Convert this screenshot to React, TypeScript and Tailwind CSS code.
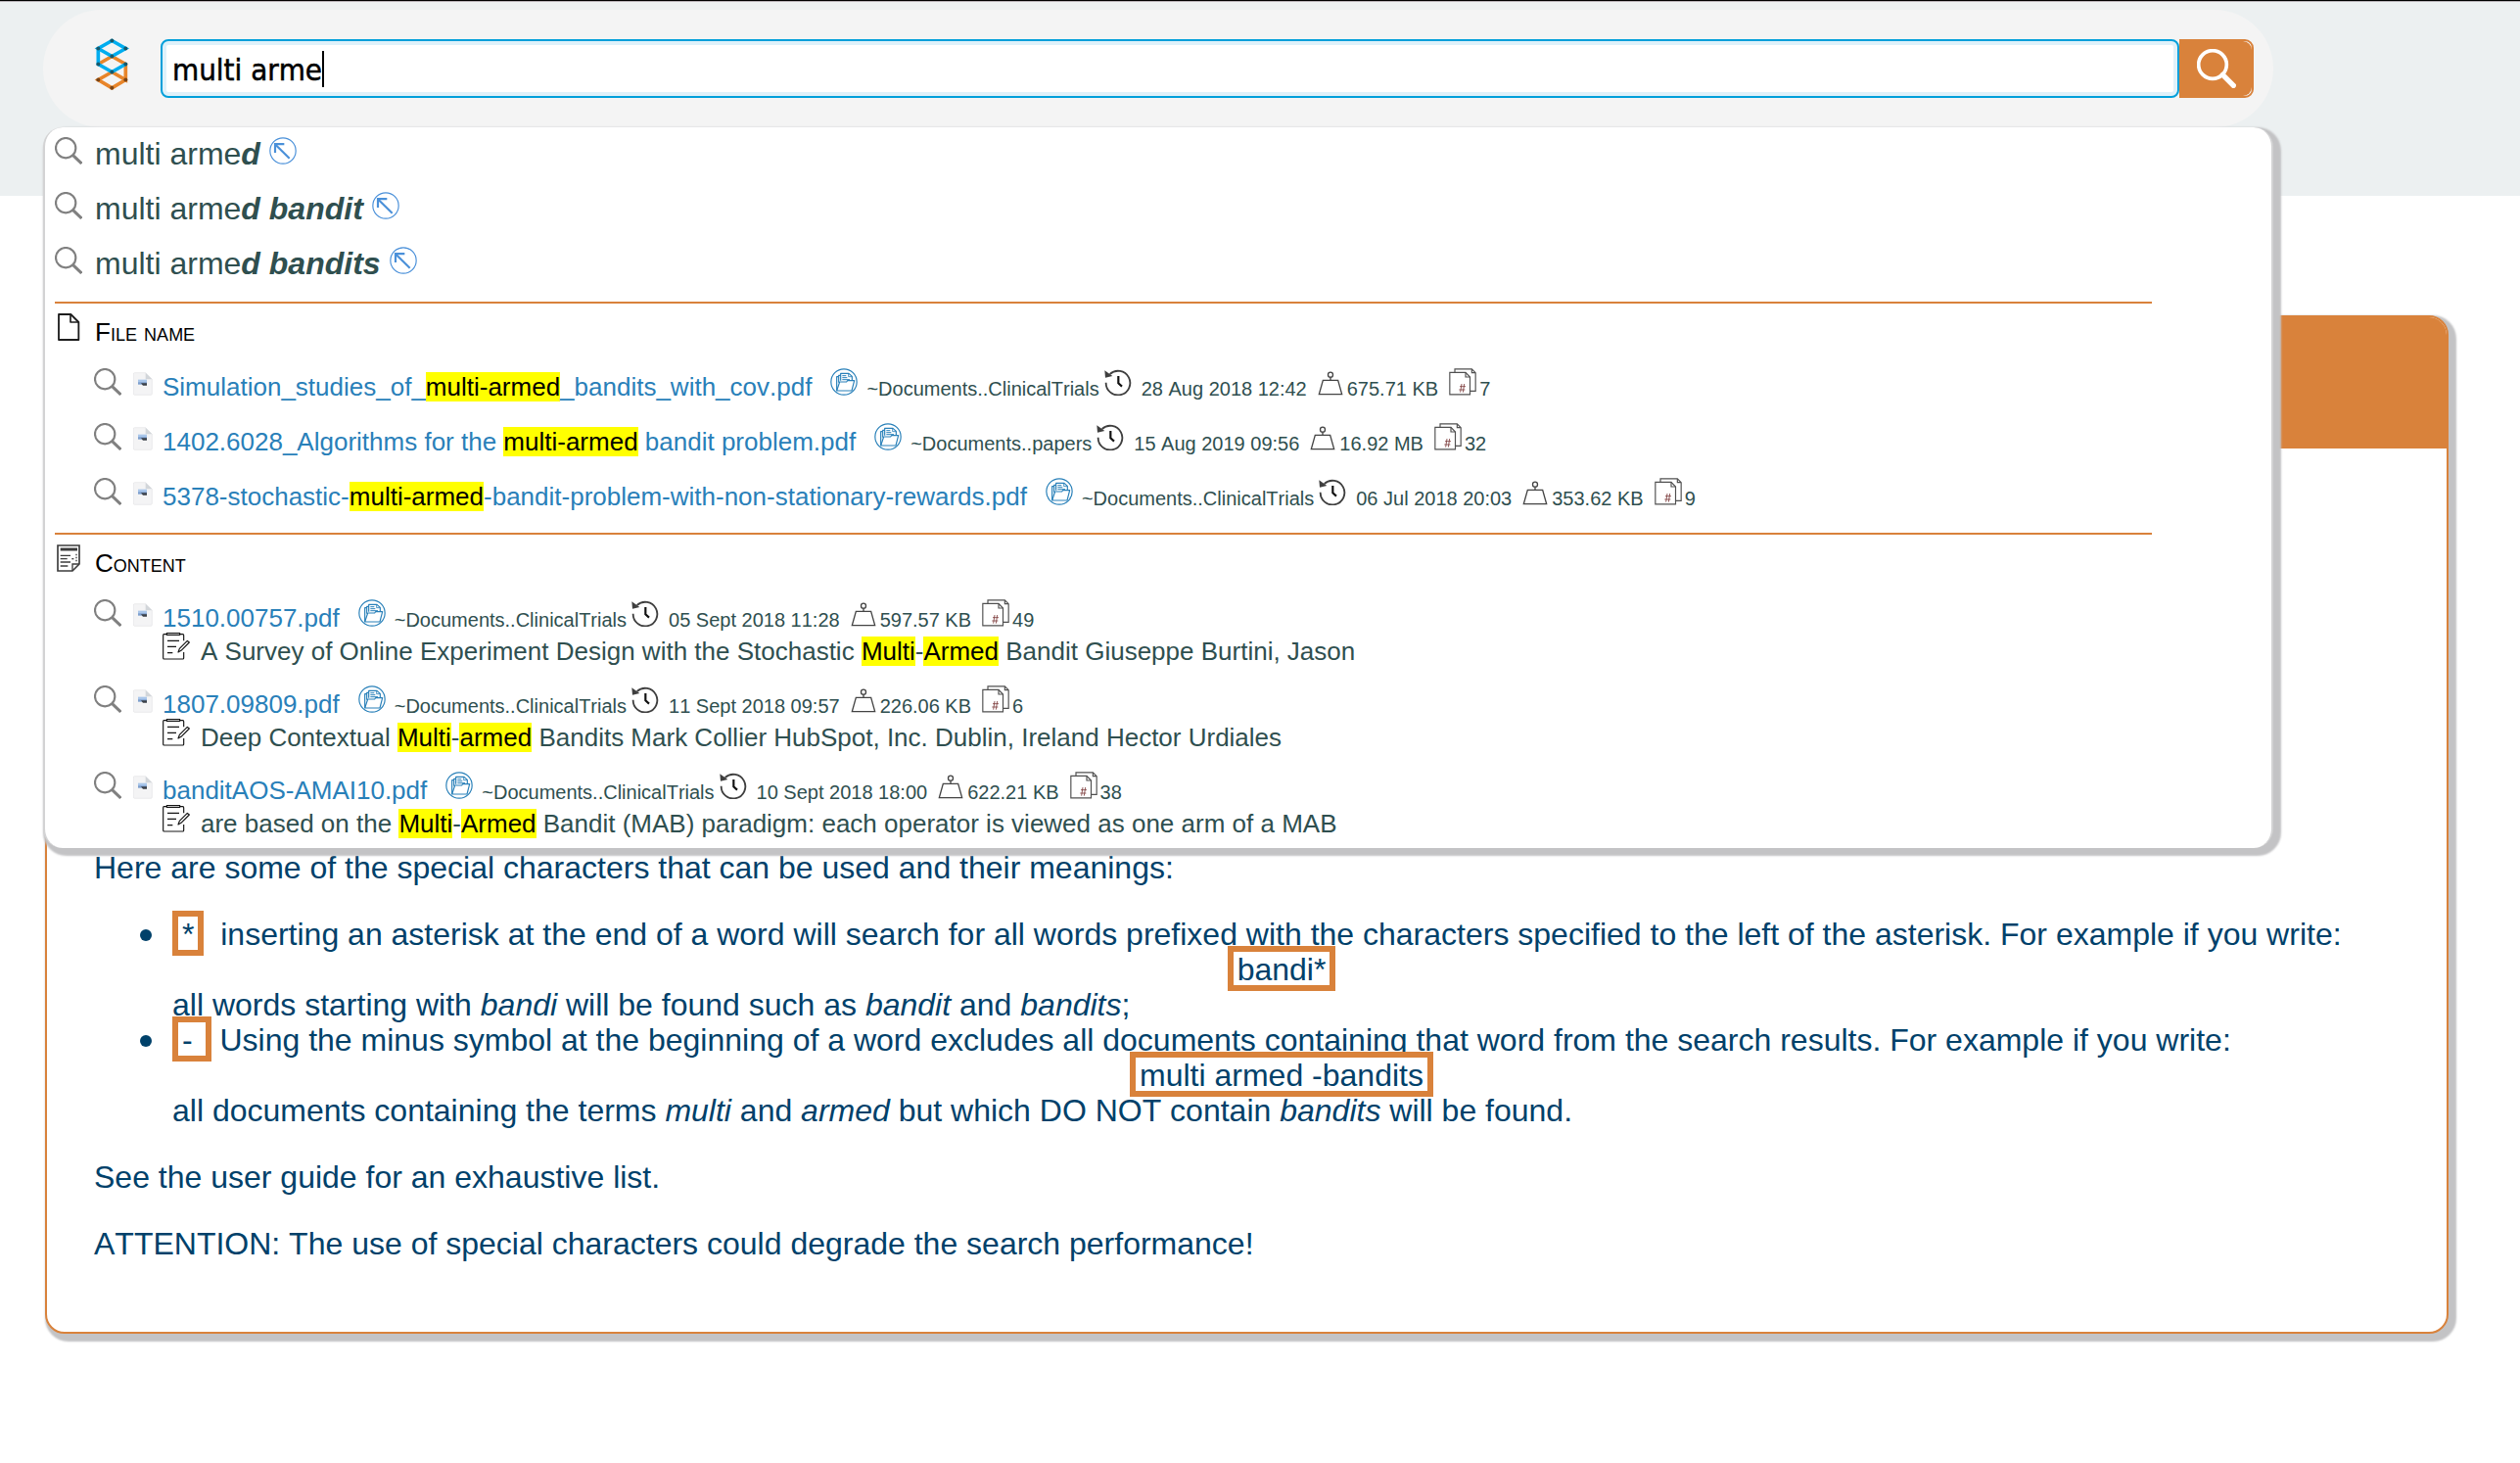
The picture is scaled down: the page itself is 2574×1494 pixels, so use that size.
import React from "react";

const ICON = "inline-block h-7 w-7 shrink-0 align-baseline";

function Logo() {
  const nodes: [number, number][] = [
    [55, 10], [13, 34], [97, 34], [55, 58], [13, 82], [97, 82], [55, 106],
  ];
  const lowNodes: [number, number][] = [[13, 130], [97, 130], [55, 155]];
  return (
    <svg viewBox="0 0 114 164" className="h-[55px] w-[38px] shrink-0" fill="none" strokeWidth="11">
      <path stroke="#e8852a" d="M13 82 55 58 97 82V130L55 106 13 130 55 155 97 130" />
      <path stroke="#00adef" d="M55 58 13 34 55 10 97 34 55 58M13 34V82L55 106 97 82" />
      {nodes.map(([x, y]) => (
        <circle key={`${x}-${y}`} cx={x} cy={y} r="6" fill="#17596b" />
      ))}
      {lowNodes.map(([x, y]) => (
        <circle key={`${x}-${y}`} cx={x} cy={y} r="6" fill="#7b4516" />
      ))}
    </svg>
  );
}

function SearchIcon() {
  return (
    <svg viewBox="0 0 84 84" className={ICON} fill="none" stroke="#808080">
      <circle cx="33.5" cy="33.5" r="30.5" strokeWidth="6.5" />
      <path d="M55 55 82 81" strokeWidth="9" />
    </svg>
  );
}

function ArrowIcon() {
  return (
    <svg viewBox="0 0 84 84" className={ICON} fill="none" stroke="#4a90d9">
      <circle cx="42" cy="42" r="39.5" strokeWidth="3.5" />
      <path d="M62 65 20 24" strokeWidth="6.5" />
      <path d="M46 21.5H18V48" strokeWidth="6.5" />
    </svg>
  );
}

function FileIcon() {
  return (
    <svg viewBox="0 0 84 84" className={ICON} fill="none" stroke="#1d1d1d" strokeWidth="5.5" strokeLinejoin="round">
      <path d="M12 3H49L73 27V81H12Z" />
      <path d="M48 4V27H72" strokeWidth="5" />
    </svg>
  );
}

function ContentIcon() {
  return (
    <svg viewBox="0 0 84 84" className={ICON} fill="none" stroke="#3c3c3c" strokeWidth="5">
      <path d="M9 3H75V60L54 81H9Z" />
      <path d="M54 81V60H75" strokeWidth="4" />
      <path d="M17 15H69" strokeWidth="9" />
      <path d="M17 34H48M17 44H38M17 54H48M17 66H40" strokeWidth="4" />
      <path d="M66 29V53" strokeWidth="4" strokeDasharray="5 4" />
      <path d="M52 44H58" strokeWidth="4" />
    </svg>
  );
}

function DocIcon() {
  return (
    <svg viewBox="0 0 60 72" className="inline-block h-6 w-5 align-baseline">
      <path d="M4 2H38L58 22V66Q58 70 54 70H4Q1 70 1 66V6Q1 2 4 2Z" fill="#f4f4f5" stroke="#e4e4e6" strokeWidth="2" />
      <path d="M38 2V22H58Z" fill="#d2d6da" />
      <rect x="15" y="23" width="27" height="13" fill="#a9c6ea" />
      <rect x="15" y="31" width="27" height="7" fill="#7d9fcd" />
      <path d="M24 34H42V41H30Z" fill="#3b4148" />
    </svg>
  );
}

function FolderIcon() {
  return (
    <svg viewBox="0 0 84 84" className={ICON} fill="none" stroke="#2980b9" strokeWidth="3.5" strokeLinejoin="round">
      <circle cx="42" cy="42" r="39.5" />
      <path d="M20 69V26H26" />
      <path d="M20 69 29 42H50L53 38H74L66 69Z" />
      <path d="M26 44V22H32M32 38V16H57L67 25V36" />
      <path d="M56 17V26H66" strokeWidth="2.5" />
      <path d="M37 23H49M37 29H52M37 35H60" strokeWidth="3" />
    </svg>
  );
}

function HistoryIcon() {
  return (
    <svg viewBox="0 0 84 84" className={ICON} fill="none" stroke="#3f3f3f" strokeWidth="5.5">
      <path d="M17 18A37 37 0 1 1 5 44" />
      <path d="M1 7 3 29 25 24Z" fill="#3f3f3f" stroke="none" />
      <path d="M43 24V46L54 56" stroke="#111" strokeWidth="6.5" />
    </svg>
  );
}

function WeightIcon() {
  return (
    <svg viewBox="0 0 84 84" className={ICON} fill="none" stroke="#444" strokeWidth="4">
      <circle cx="42" cy="20" r="7.5" />
      <path d="M42 27V37M19 37H65L77 80H7Z" />
    </svg>
  );
}

function PagesIcon() {
  return (
    <svg viewBox="0 0 84 84" className={ICON} fill="none" stroke="#505050" strokeWidth="3.5">
      <path d="M18 13V2.500H70L81.500 14V70H65" />
      <path d="M70 3V14H81" />
      <path d="M2.500 13H51L64.500 27V80.500H2.500Z" />
      <path d="M51 13V27H64" />
      <path d="M39 48 35 74M47 48 43 74M33 56H51M31 66H49" stroke="#7d3c3c" strokeWidth="2.500" />
    </svg>
  );
}

function NoteIcon() {
  return (
    <svg viewBox="0 0 84 84" className={ICON} fill="none" stroke="#161616" strokeWidth="3.500" strokeLinejoin="round">
      <path d="M13 5H4Q2 5 2 8V78Q2 81 5 81H62Q65 81 65 78V60M54 5H62Q65 5 65 8V25" />
      <path d="M13 1.500H53V7H13Z" />
      <path d="M15 25H51M15 43H42M15 62H31" strokeWidth="4" />
      <path d="M76 25 82 30 57 55 48 60 52 49Z" />
    </svg>
  );
}

function Mark({ children }: { children: React.ReactNode }) {
  return <span className="bg-[#ffff00] text-black">{children}</span>;
}

type Meta = { folder: string; date: string; size: string; pages: string };

function ResultLine({ name, meta }: { name: React.ReactNode; meta: Meta }) {
  return (
    <div className="flex h-7 items-baseline whitespace-pre pl-10 text-[20px] leading-7">
      <SearchIcon />
      <span className="ml-3">
        <DocIcon />
      </span>
      <span className="ml-[10px] text-[26px] text-[#2980b9]">{name}</span>
      <span className="ml-[19px]">
        <FolderIcon />
      </span>
      <span className="ml-[9px]">{meta.folder}</span>
      <span className="ml-[5px]">
        <HistoryIcon />
      </span>
      <span className="ml-[10px]">{meta.date}</span>
      <span className="ml-[10px]">
        <WeightIcon />
      </span>
      <span className="ml-[3px]">{meta.size}</span>
      <span className="ml-[11px]">
        <PagesIcon />
      </span>
      <span className="ml-[3px]">{meta.pages}</span>
    </div>
  );
}

function Heading({ icon, title }: { icon: React.ReactNode; title: string }) {
  return (
    <div className="mt-[10px] flex h-7 items-baseline text-[26px] leading-7 text-black">
      {icon}
      <span className="ml-[13px] [font-variant:small-caps]">{title}</span>
    </div>
  );
}

function Divider() {
  return <div className="h-[2px] w-[2142px] bg-[#d9823b]" />;
}

const suggestions = ["d", "d bandit", "d bandits"];

const fileResults: { name: React.ReactNode; meta: Meta }[] = [
  {
    name: <>Simulation_studies_of_<Mark>multi-armed</Mark>_bandits_with_cov.pdf</>,
    meta: { folder: "~Documents..ClinicalTrials", date: "28 Aug 2018 12:42", size: "675.71 KB", pages: "7" },
  },
  {
    name: <>1402.6028_Algorithms for the <Mark>multi-armed</Mark> bandit problem.pdf</>,
    meta: { folder: "~Documents..papers", date: "15 Aug 2019 09:56", size: "16.92 MB", pages: "32" },
  },
  {
    name: <>5378-stochastic-<Mark>multi-armed</Mark>-bandit-problem-with-non-stationary-rewards.pdf</>,
    meta: { folder: "~Documents..ClinicalTrials", date: "06 Jul 2018 20:03", size: "353.62 KB", pages: "9" },
  },
];

const contentResults: { name: string; meta: Meta; snippet: React.ReactNode }[] = [
  {
    name: "1510.00757.pdf",
    meta: { folder: "~Documents..ClinicalTrials", date: "05 Sept 2018 11:28", size: "597.57 KB", pages: "49" },
    snippet: (
      <>
        A Survey of Online Experiment Design with the Stochastic <Mark>Multi</Mark>-<Mark>Armed</Mark> Bandit Giuseppe
        Burtini, Jason
      </>
    ),
  },
  {
    name: "1807.09809.pdf",
    meta: { folder: "~Documents..ClinicalTrials", date: "11 Sept 2018 09:57", size: "226.06 KB", pages: "6" },
    snippet: (
      <>
        Deep Contextual <Mark>Multi</Mark>-<Mark>armed</Mark> Bandits Mark Collier HubSpot, Inc. Dublin, Ireland Hector
        Urdiales
      </>
    ),
  },
  {
    name: "banditAOS-AMAI10.pdf",
    meta: { folder: "~Documents..ClinicalTrials", date: "10 Sept 2018 18:00", size: "622.21 KB", pages: "38" },
    snippet: (
      <>
        are based on the <Mark>Multi</Mark>-<Mark>Armed</Mark> Bandit (MAB) paradigm: each operator is viewed as one arm
        of a MAB
      </>
    ),
  },
];

function Dropdown() {
  return (
    <div className="absolute left-0 top-[120px] z-10 h-[736px] w-[2278px] rounded-[20px] border-x-2 border-[#d3d3d4] bg-white pl-[10px] pt-[10px] text-[#2f4f4f] shadow-[4px_4px_2px_4px_#c3c3c5]">
      <div className="flex flex-col gap-7">
        {suggestions.map((rest) => (
          <div key={rest} className="flex h-7 items-baseline text-[32px] leading-7">
            <SearchIcon />
            <span className="ml-[13px]">
              multi arme<b><i>{rest}</i></b>
            </span>
            <span className="ml-[9px]">
              <ArrowIcon />
            </span>
          </div>
        ))}
      </div>
      <div className="mt-7">
        <Divider />
        <Heading icon={<FileIcon />} title="File name" />
        <div className="mt-7 flex flex-col gap-7">
          {fileResults.map((r) => (
            <ResultLine key={r.meta.date} name={r.name} meta={r.meta} />
          ))}
        </div>
      </div>
      <div className="mt-7">
        <Divider />
        <Heading icon={<ContentIcon />} title="Content" />
        <div className="mt-7 flex flex-col gap-[26px]">
          {contentResults.map((r) => (
            <div key={r.name} className="flex flex-col gap-[6px]">
              <ResultLine name={r.name} meta={r.meta} />
              <div className="flex h-7 items-baseline whitespace-nowrap pl-[110px] text-[26px] leading-7">
                <NoteIcon />
                <span className="ml-[11px]">{r.snippet}</span>
              </div>
            </div>
          ))}
        </div>
      </div>
    </div>
  );
}

function SearchBar() {
  return (
    <div className="relative ml-[44px] flex h-[120px] w-[2278px] items-start rounded-[60px] bg-[#f4f4f4] pt-[30px]">
      <div className="ml-[52px] mr-[30px] -mt-[2px] flex">
        <Logo />
      </div>
      <div className="flex h-[60px] w-[2062px] items-center rounded-[8px] border-2 border-[#009fda] bg-white pl-[10px] font-['DejaVu_Sans_Condensed','DejaVu_Sans',sans-serif] text-[31px] text-black shadow-[inset_0_0_0_4px_#dff1fa] [font-stretch:condensed]">
        <span className="pt-[2px] [-webkit-text-stroke:0.5px_#000]">multi arme</span>
        <span className="h-[37px] w-[2px] bg-black" />
      </div>
      <div className="h-[60px] w-[76px] rounded-r-[9px] border-2 border-[#d9823b] bg-[#f4f4f4]">
        <div className="flex h-full w-full items-center justify-center rounded-r-[9px] bg-[#d9823b]">
          <svg viewBox="0 0 120 120" className="h-10 w-10" fill="none" stroke="#fff">
            <circle cx="48" cy="48" r="43" strokeWidth="11" />
            <path d="M79 79 112 112" strokeWidth="16" strokeLinecap="round" />
          </svg>
        </div>
      </div>
      <Dropdown />
    </div>
  );
}

function Boxed({ children }: { children: React.ReactNode }) {
  return (
    <span className="relative -mb-1 -mt-[6px] inline-block h-[46px] whitespace-pre border-[6px] border-[#d9823b] bg-white px-1 leading-9">
      {children}
    </span>
  );
}

function Bullet() {
  return <span className="absolute -left-[33px] top-[13px] h-3 w-3 rounded-full bg-[#00416a]" />;
}

function HelpCard() {
  return (
    <div className="ml-[46px] mt-[122px] h-[1040px] w-[2455px] rounded-[20px] border-2 border-[#d9823b] bg-white shadow-[4px_4px_2px_4px_#c3c3c5]">
      <div className="h-[134px] rounded-t-[18px] bg-[#d9823b]" />
      <div className="flex flex-col gap-8 pl-[48px] pr-[57px] pt-[410px] text-[32px] leading-9 text-[#00416a]">
        <p>Here are some of the special characters that can be used and their meanings:</p>
        <ul className="pl-20">
          <li className="relative">
            <Bullet />
            <div className="h-9 whitespace-pre">
              <Boxed>*</Boxed>
              <span className="-ml-px">
                {"\u00a0 "}inserting an asterisk at the end of a word will search for all words prefixed with the
                characters specified to the left of the asterisk. For example if you write:
              </span>
            </div>
            <div className="h-9 text-center">
              <Boxed>bandi*</Boxed>
            </div>
            <div className="h-9">
              all words starting with <i>bandi</i> will be found such as <i>bandit</i> and <i>bandits</i>;
            </div>
          </li>
          <li className="relative">
            <Bullet />
            <div className="h-9 whitespace-nowrap">
              <Boxed>{"- "}</Boxed> Using the minus symbol at the beginning of a word excludes all documents
              containing that word from the search results. For example if you write:
            </div>
            <div className="h-9 text-center">
              <Boxed>multi armed -bandits</Boxed>
            </div>
            <div className="h-9">
              all documents containing the terms <i>multi</i> and <i>armed</i> but which DO NOT contain <i>bandits</i>{" "}
              will be found.
            </div>
          </li>
        </ul>
        <p>See the user guide for an exhaustive list.</p>
        <p>ATTENTION: The use of special characters could degrade the search performance!</p>
      </div>
    </div>
  );
}

export default function App() {
  return (
    <div className="h-[1494px] w-[2574px] overflow-hidden bg-white font-['Liberation_Sans',Arial,sans-serif] [font-kerning:none]">
      <header className="h-[200px] border-t border-black bg-[#ecf0f1]">
        <div className="mb-2 h-px bg-[#b9b3b9]" />
        <SearchBar />
      </header>
      <HelpCard />
    </div>
  );
}
